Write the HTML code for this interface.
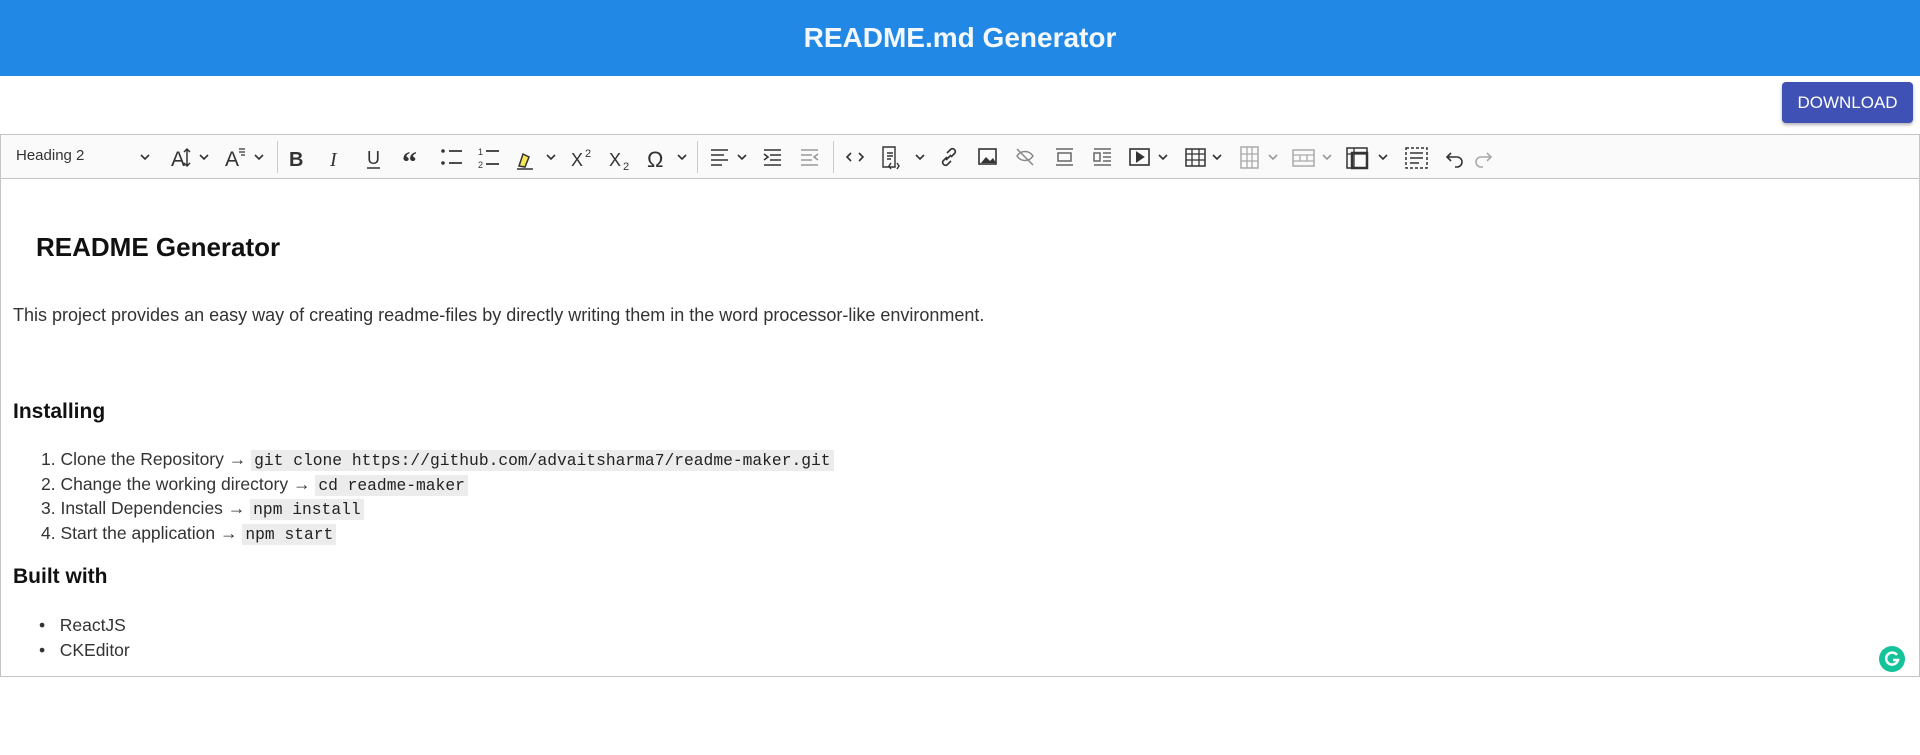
<!DOCTYPE html>
<html><head><meta charset="utf-8"><style>
*{box-sizing:border-box;margin:0;padding:0}
body{width:1920px;height:755px;background:#fff;font-family:"Liberation Sans",sans-serif;position:relative;overflow:hidden;color:#222}
.hdr{position:absolute;left:0;top:0;width:1920px;height:76px;background:#2189e5;color:#f4f8fc;font-weight:bold;font-size:28px;text-align:center;line-height:76px}
.btn{position:absolute;left:1782px;top:82px;width:131px;height:41px;background:#3f51b5;color:#fff;font-size:17px;line-height:41px;text-align:center;border-radius:4px;box-shadow:0 2px 3px rgba(0,0,0,.3)}
.ed{position:absolute;left:0;top:134px;width:1920px;height:543px;border:1px solid #c4c4c4}
.tb{position:absolute;left:0;top:0;width:1918px;height:44px;background:#fafafa;border-bottom:1px solid #c4c4c4}
.i{position:absolute;top:11px}
.sep{position:absolute;top:6px;width:1px;height:32px;background:#ccc}
.t{position:absolute;white-space:nowrap}
.row{height:24.5px;line-height:24.5px}
code{font-family:"Liberation Mono",monospace;background:#ececec;padding:1px 3px;font-size:16.3px;color:#222;line-height:1}
</style></head><body>
<div class="hdr">README.md Generator</div>
<div class="btn">DOWNLOAD</div>
<div class="ed">
<div class="tb">
<div class="t" style="left:15px;top:12px;font-size:15px;color:#333">Heading 2</div>
<svg class="i" style="left:0;top:0" width="1500" height="44" fill="none" stroke="#333" stroke-width="2">
<path d="M140 20l4 4 4-4M199 20l4 4 4-4M254 20l4 4 4-4M546 20l4 4 4-4M677 20l4 4 4-4M737 20l4 4 4-4M915 20l4 4 4-4M1158 20l4 4 4-4M1212 20l4 4 4-4M1378 20l4 4 4-4" stroke-width="1.6"/>
<path d="M1268 20l4 4 4-4M1322 20l4 4 4-4" stroke="#999" stroke-width="1.6"/>
<text x="170" y="31" font-size="21" fill="#333" stroke="none" font-family="Liberation Sans">A</text><path d="M186 14v17M183 17l3-3 3 3M183 28l3 3 3-3" stroke-width="1.5"/>
<text x="224" y="31" font-size="21" fill="#333" stroke="none" font-family="Liberation Sans">A</text><path d="M238 14h6M238 17h6M240 20h4" stroke-width="1.3"/>
<text x="288" y="31" font-size="20" font-weight="bold" fill="#333" stroke="none" font-family="Liberation Sans">B</text>
<text x="329" y="31" font-size="20" font-style="italic" fill="#333" stroke="none" font-family="Liberation Serif">I</text>
<text x="366" y="29" font-size="18" fill="#333" stroke="none" font-family="Liberation Sans">U</text><path d="M366 33h13" stroke-width="1.5"/>
<text x="401" y="37" font-size="30" font-weight="bold" fill="#333" stroke="none" font-family="Liberation Serif">“</text>
<circle cx="442" cy="16" r="1.8" fill="#333" stroke="none"/><circle cx="442" cy="28" r="1.8" fill="#333" stroke="none"/><path d="M448 16h13M448 28h13" stroke-width="1.8"/>
<text x="477" y="20" font-size="9" fill="#333" stroke="none" font-family="Liberation Sans">1</text><text x="477" y="33" font-size="9" fill="#333" stroke="none" font-family="Liberation Sans">2</text><path d="M485 16h13M485 29h13" stroke-width="1.8"/>
<path d="M518 31l4-12 6 3-4 10z" fill="#f6e65a" stroke-width="1.5"/><path d="M516 34h16" stroke-width="1.5"/>
<text x="570" y="31" font-size="18" fill="#333" stroke="none" font-family="Liberation Sans">X</text><text x="584" y="22" font-size="11" fill="#333" stroke="none" font-family="Liberation Sans">2</text>
<text x="608" y="31" font-size="18" fill="#333" stroke="none" font-family="Liberation Sans">X</text><text x="622" y="35" font-size="11" fill="#333" stroke="none" font-family="Liberation Sans">2</text>
<text x="646" y="32" font-size="22" fill="#333" stroke="none" font-family="Liberation Sans">Ω</text>
<path d="M710 15h17M710 20h13M710 25h17M710 30h11" stroke-width="1.6"/>
<path d="M763 15h17M769 20h11M769 25h11M763 30h17M763 19l4 3-4 3" stroke-width="1.6"/>
<path d="M800 15h17M800 20h11M800 25h11M800 30h17M817 19l-4 3 4 3" stroke="#999" stroke-width="1.6"/>
<path d="M850 18l-4 4 4 4M858 18l4 4-4 4" stroke-width="1.6"/>
<path d="M882 12h12v20h-12zM886 18h6M886 21h6M886 24h4M890 28l-2 3 2 3M896 28l2 3-2 3" stroke-width="1.4"/>
<path d="M946 22l-4 4a3 3 0 0 0 4 4l4-4M950 22l4-4a3 3 0 0 0-4-4l-4 4M945 25l5-5" stroke-width="1.6"/>
<rect x="978" y="14" width="17" height="15" stroke-width="1.6"/><path d="M980 28l5-6 4 4 3-3 3 5z" fill="#333" stroke="none"/>
<path d="M1016 21c4-6 12-6 16 0c-4 6-12 6-16 0zM1016 14l16 16" stroke="#888" stroke-width="1.5"/>
<path d="M1055 14h17M1057 18h13v8h-13zM1055 30h17" stroke="#666" stroke-width="1.5"/>
<path d="M1093 14h17M1093 18h6v8h-6zM1102 18h8M1102 22h8M1102 26h8M1093 30h17" stroke="#666" stroke-width="1.5"/>
<rect x="1129" y="14" width="19" height="16" stroke-width="1.6"/><path d="M1136 18l6 4-6 4z" fill="#333"/>
<rect x="1185" y="14" width="19" height="17" stroke-width="1.5"/><path d="M1185 19h19M1185 25h19M1191 14v17M1198 14v17" stroke-width="1.3"/>
<rect x="1240" y="12" width="17" height="21" stroke="#aaa" stroke-width="1.5"/><path d="M1246 12v21M1251 12v21M1240 19h17M1240 26h17" stroke="#aaa" stroke-width="1.3"/>
<rect x="1292" y="15" width="21" height="16" stroke="#aaa" stroke-width="1.5"/><path d="M1292 20h21M1292 26h21M1299 20v6M1306 20v6" stroke="#aaa" stroke-width="1.3"/>
<rect x="1346" y="13" width="20" height="20" stroke-width="1.5"/><path d="M1346 19h20M1353 13v20" stroke-width="1.3"/><rect x="1351" y="18" width="15" height="15" stroke-width="2.5"/>
<rect x="1405" y="13" width="21" height="20" stroke-dasharray="3 2" stroke-width="1.5"/><path d="M1409 18h13M1409 23h13M1409 28h9" stroke-width="1.6"/>
<path d="M1450 18l-4 4 4 4M1446 22h10a5 5 0 0 1 0 10h-2" stroke-width="1.6"/>
<path d="M1486 18l4 4-4 4M1490 22h-10a5 5 0 0 0 0 10h2" stroke="#aaa" stroke-width="1.6"/>
</svg>
<div class="sep" style="left:276px"></div><div class="sep" style="left:696px"></div><div class="sep" style="left:832px"></div>
</div>
<div class="t" style="left:35px;top:97px;font-size:26px;font-weight:bold;color:#111">README Generator</div>
<div class="t" style="left:12px;top:170px;font-size:18px;color:#333">This project provides an easy way of creating readme-files by directly writing them in the word processor-like environment.</div>
<div class="t" style="left:12px;top:265px;font-size:21px;font-weight:bold;color:#111">Installing</div>
<div class="t" style="left:40px;top:312px;font-size:17.5px;color:#333">
<div class="row">1. Clone the Repository → <code>git clone https://github.com/advaitsharma7/readme-maker.git</code></div>
<div class="row">2. Change the working directory → <code>cd readme-maker</code></div>
<div class="row">3. Install Dependencies → <code>npm install</code></div>
<div class="row">4. Start the application → <code>npm start</code></div></div>
<div class="t" style="left:12px;top:430px;font-size:21px;font-weight:bold;color:#111">Built with</div>
<div class="t" style="left:38px;top:478px;font-size:17.5px;line-height:24.5px;color:#333">•&nbsp;&nbsp;&nbsp;ReactJS<br>•&nbsp;&nbsp;&nbsp;CKEditor</div>
<svg style="position:absolute;left:1877px;top:510px" width="28" height="28"><circle cx="14" cy="14" r="13" fill="#15c39a"/><path d="M19 10a6 6 0 1 0 1 5h-5" fill="none" stroke="#fff" stroke-width="2.5"/></svg>
</div>
</body></html>
